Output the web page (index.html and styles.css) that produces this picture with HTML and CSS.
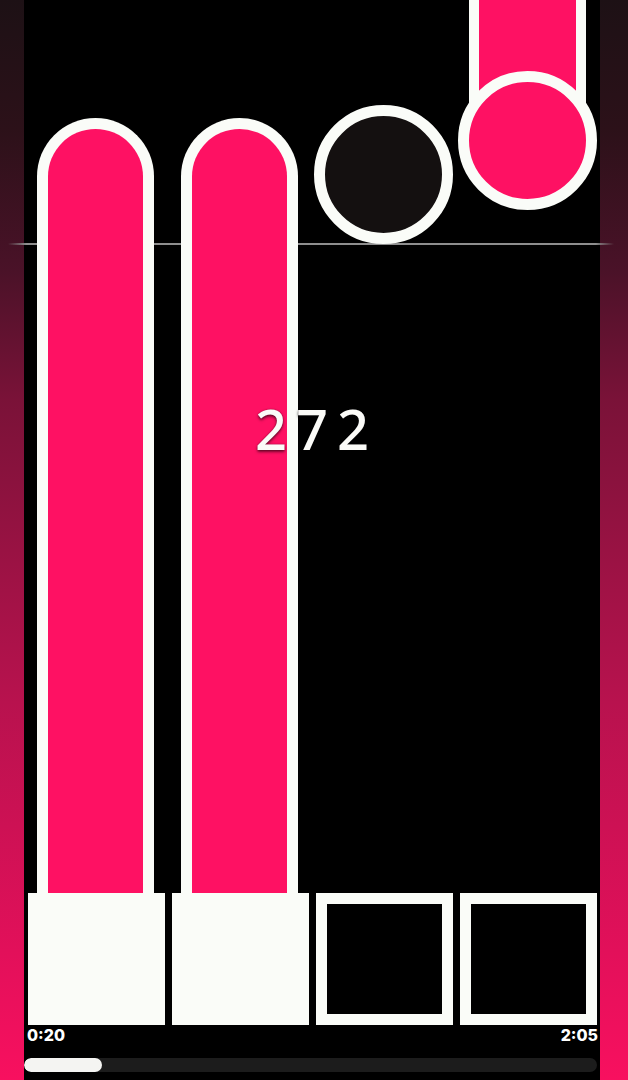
FILE: index.html
```html
<!DOCTYPE html>
<html>
<head>
<meta charset="utf-8">
<link rel="stylesheet" href="styles.css">
</head>
<body>
<div class="screen">
  <div class="strip strip-left"></div>
  <main class="stage">
    <div class="playfield">
      <div class="lane">
        <div class="hold"></div>
      </div>
      <div class="lane">
        <div class="hold"></div>
      </div>
      <div class="lane">
        <div class="tap tap-dark"></div>
      </div>
      <div class="lane">
        <div class="hold-tail"></div>
        <div class="tap tap-pink"></div>
      </div>
      <div class="score">272</div>
    </div>
    <div class="keys">
      <div class="key key-on"></div>
      <div class="key key-on"></div>
      <div class="key key-off"></div>
      <div class="key key-off"></div>
    </div>
    <div class="times">
      <span class="time">0:20</span>
      <span class="time">2:05</span>
    </div>
    <div class="progress">
      <div class="progress-fill" style="width: 78px"></div>
    </div>
  </main>
  <div class="strip strip-right"></div>
  <div class="judge-line"></div>
</div>
</body>
</html>
```

FILE: styles.css
```css
* { box-sizing: border-box; }
html, body {
  margin: 0;
  padding: 0;
  background: #000;
  overflow: hidden;
}
.screen {
  position: relative;
  display: flex;
  width: 628px;
  height: 1080px;
}
.strip {
  flex: none;
  height: 100%;
  background: linear-gradient(to bottom, #1d1115 0%, #2c1119 12%, #4a1228 25%, #7a1238 37%, #b8124e 65%, #e2105a 88%, #f8105f 100%);
}
.strip-left { width: 24px; }
.strip-right { width: 28px; }
.stage {
  flex: none;
  width: 576px;
  display: flex;
  flex-direction: column;
  background: #000;
}
.playfield {
  position: relative;
  z-index: 1;
  height: 893px;
  display: grid;
  grid-template-columns: repeat(4, 137px);
  column-gap: 7px;
  padding-left: 4px;
}
.lane {
  position: relative;
  height: 100%;
}
.hold {
  position: absolute;
  left: 9px;
  top: 118px;
  bottom: 0;
  width: 117px;
  background: #fe1163;
  border: 11px solid #fafcf8;
  border-bottom: 0;
  border-radius: 58.5px 58.5px 0 0;
}
.hold-tail {
  position: absolute;
  left: 9px;
  top: 0;
  width: 117px;
  height: 140px;
  background: #fe1163;
  border: 10px solid #fafcf8;
  border-top: 0;
  border-bottom: 0;
}
.tap {
  position: absolute;
  width: 139px;
  height: 139px;
  border-radius: 50%;
  border: 11px solid #fafcf8;
}
.tap-dark {
  left: -2px;
  top: 105px;
  background: #141010;
}
.tap-pink {
  left: -2px;
  top: 71px;
  background: #fe1163;
}
.score {
  position: absolute;
  left: 0;
  right: 0;
  top: 388px;
  text-align: center;
  font-family: "Noto Sans", sans-serif;
  font-weight: 500;
  font-size: 56px;
  line-height: 80px;
  letter-spacing: 9px;
  text-indent: 9px;
  color: #fbfbf8;
  text-shadow: 0 2px 3px rgba(0, 0, 0, 0.55), 0 0 2px rgba(0, 0, 0, 0.4);
}
.keys {
  display: grid;
  grid-template-columns: repeat(4, 137px);
  column-gap: 7px;
  padding-left: 4px;
  height: 132px;
}
.key { height: 132px; }
.key-on { background: #fafcf8; }
.key-off {
  background: #000;
  border: 11px solid #fafcf8;
}
.times {
  display: flex;
  justify-content: space-between;
  padding: 0 2px 0 3px;
  height: 33px;
  font-family: "Inter", sans-serif;
  font-weight: 800;
  font-size: 16px;
  line-height: 20px;
  color: #fff;
}
.progress {
  margin-right: 3px;
  height: 14px;
  border-radius: 7px;
  background: #1c1c1c;
  overflow: hidden;
}
.progress-fill {
  height: 100%;
  border-radius: 7px;
  background: #f4f4f2;
}
.judge-line {
  position: absolute;
  left: 8px;
  right: 14px;
  top: 243px;
  height: 2px;
  background: linear-gradient(to right, rgba(140,140,140,0) 0%, #8e8e8e 3%, #8e8e8e 97%, rgba(140,140,140,0) 100%);
  z-index: 0;
}
```
